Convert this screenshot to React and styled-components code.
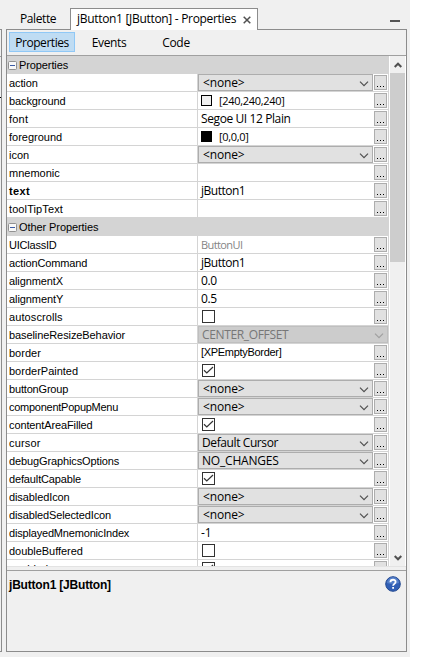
import React from 'react';
import styled, { createGlobalStyle } from 'styled-components';

const Global = createGlobalStyle`
  * { box-sizing: border-box; }
  body { margin: 0; background: #fff; overflow: hidden; }
`;
const ui = `'Open Sans', 'Noto Sans', sans-serif`;
const arial = `'Liberation Sans', Arial, sans-serif`;

const Window = styled.div`
  width: 410px; height: 657px; background: #f0f0f0; color: #000;
  display: flex; overflow: hidden;
`;
const Neighbour = styled.div`
  width: 2px; height: 623px; margin-top: 29px; flex: none;
  border: solid #8c8c8c; border-width: 1px 1px 1px 0;
  display: flex; flex-direction: column;
`;
const NeighbourBar = styled.div`height: 27px; border-bottom: 1px solid #a0a0a0;`;
const NeighbourMark = styled.div`height: 1px; margin-top: 40px; background: #000;`;
const Dock = styled.div`width: 401px; margin-left: 4px; display: flex; flex-direction: column;`;
const TabStrip = styled.div`
  height: 30px; padding-top: 8px; display: flex; flex: none; font: 12px/22px ${ui};
`;
const Tab = styled.div`
  width: 64px; height: 22px; padding-left: 14px; white-space: nowrap;
  border-bottom: 1px solid #8c8c8c; letter-spacing: -0.4px;
`;
const ActiveTab = styled.div`
  width: 188px; height: 22px; padding-left: 6px; background: #fff;
  border: solid #8c8c8c; border-width: 1px 1px 0 1px;
  display: flex; align-items: flex-start; line-height: 20px; white-space: nowrap;
`;
const TabTitle = styled.span`width: 166px; letter-spacing: -0.31px;`;
const CloseIcon = styled.svg`width: 8px; height: 8px; margin-top: 7px; flex: none;`;
const StripRest = styled.div`
  flex: 1; height: 22px; border-bottom: 1px solid #8c8c8c;
  display: flex; justify-content: flex-end; padding: 12px 7px 0 0;
`;
const Minimise = styled.div`width: 10px; height: 2px; background: #555;`;
const Panel = styled.div`
  height: 622px; border: solid #8c8c8c; border-width: 0 1px 1px 1px;
  display: flex; flex-direction: column;
`;
const Toolbar = styled.div`
  height: 26px; flex: none; border-bottom: 1px solid #a0a0a0; padding: 2px 0 0 2px;
  display: flex; font: 12px/20px ${ui};
`;
const ModeButton = styled.div`
  width: ${p => p.$w}px; height: 20px; text-align: center; white-space: nowrap;
  letter-spacing: ${p => p.$ls || 0}px;
  ${p => p.$on && 'background: #bfdcf3; box-shadow: inset 0 0 0 1px #90c8f6;'}
  line-height: 21px;
`;
const Sheet = styled.div`
  height: 511px; flex: none; display: flex; overflow: hidden; background: #fff;
  border-bottom: 1px solid #e3e3e3;
`;
const Grid = styled.div`width: 382px; margin-right: 1px; flex: none;`;
const Group = styled.div`
  height: 18px; background: #d4d4d4; display: flex; align-items: center;
  font: 11px/18px ${arial}; white-space: nowrap;
`;
const Toggle = styled.svg`width: 9px; height: 9px; margin: 0 2px 0 1px;`;
const Row = styled.div`height: 18px; display: flex; border-bottom: 1px solid #d4d4d4; border-right: 1px solid #d4d4d4;`;
const Name = styled.div`
  width: 191px; height: 17px; flex: none; padding-left: 2px; border-right: 1px solid #d4d4d4;
  font: ${p => (p.$bold ? 'bold' : 'normal')} 11px/18px ${arial};
  letter-spacing: ${p => p.$ls || 0}px; white-space: nowrap;
`;
const Value = styled.div`
  width: 176px; height: 17px; flex: none; display: flex; align-items: center;
  padding-left: 3px; font: 12px/17px ${ui}; white-space: nowrap;
  color: ${p => (p.$muted ? '#858585' : '#000')};
`;
const Small = styled.span`
  font: 11px/${p => (p.$arial ? 19 : 17)}px ${p => (p.$arial ? arial : ui)};
  letter-spacing: ${p => p.$ls || 0}px;
`;
const Label = styled.span`letter-spacing: ${p => p.$ls || 0}px;`;
const Swatch = styled.span`
  width: 11px; height: 11px; margin-right: 7px; border: 1px solid #000;
  background: ${p => p.$color};
`;
const Combo = styled.div`
  width: ${p => (p.$disabled ? 190 : 175)}px; height: 17px; flex: none;
  display: flex; align-items: center; justify-content: space-between;
  padding: 0 3px 0 ${p => (p.$tight ? 3 : 4)}px; background: ${p => (p.$disabled ? '#ccc' : '#e1e1e1')};
  border: 1px solid ${p => (p.$disabled ? '#bfbfbf' : '#adadad')};
  color: ${p => (p.$disabled ? '#777' : '#000')};
  font: 12px/15px ${ui}; white-space: nowrap; margin-right: 1px;
`;
const Chevron = styled.svg`width: 10px; height: 6px; margin-top: 2px;`;
const More = styled.div`
  width: 13px; height: 15px; margin-top: 1px; flex: none; background: #e1e1e1;
  border: 1px solid #adadad; display: flex; justify-content: center; align-items: flex-end;
  gap: 2px; padding-bottom: 2px;
`;
const Dot = styled.i`width: 1px; height: 1px; background: #000;`;
const Check = styled.svg`width: 13px; height: 13px; margin-left: 1px;`;
const Scrollbar = styled.div`
  width: 15px; background: #f0f0f0; display: flex; flex-direction: column; align-items: center;
`;
const Arrow = styled.svg`width: 8px; height: 6px; flex: none; margin: ${p => p.$m};`;
const Thumb = styled.div`width: 15px; height: 189px; background: #cdcdcd; flex: none;`;
const Gap = styled.div`flex: 1;`;
const Description = styled.div`
  flex: 1; margin-top: 3px; border-top: 1px solid #a0a0a0; padding: 5px 5px 0 2px;
  display: flex; justify-content: space-between; font: bold 12px/18px ${arial};
`;
const Help = styled.svg`width: 16px; height: 16px;`;

const rows = [
  ['g', 'Properties', 0],
  ['c', 'action', '<none>'], ['w', 'background', '[240,240,240]', '#f0f0f0'],
  ['t', 'font', 'Segoe UI 12 Plain'], ['w', 'foreground', '[0,0,0]', '#000'],
  ['c', 'icon', '<none>'], ['t', 'mnemonic', ''], ['t', 'text', 'jButton1'],
  ['t', 'toolTipText', ''], ['g', 'Other Properties', 0],
  ['m', 'UIClassID', 'ButtonUI'], ['t', 'actionCommand', 'jButton1'],
  ['t', 'alignmentX', '0.0'], ['t', 'alignmentY', '0.5'], ['k', 'autoscrolls', false],
  ['d', 'baselineResizeBehavior', 'CENTER_OFFSET'], ['a', 'border', '[XPEmptyBorder]'],
  ['k', 'borderPainted', true], ['c', 'buttonGroup', '<none>'],
  ['c', 'componentPopupMenu', '<none>'], ['k', 'contentAreaFilled', true],
  ['c', 'cursor', 'Default Cursor'], ['c', 'debugGraphicsOptions', 'NO_CHANGES'],
  ['k', 'defaultCapable', true], ['c', 'disabledIcon', '<none>'],
  ['c', 'disabledSelectedIcon', '<none>'], ['t', 'displayedMnemonicIndex', '-1'],
  ['k', 'doubleBuffered', false], ['k', 'enabled', true],
];

// Tracking per text, in px.
const spacing = {
  action: -0.1, background: -0.1, font: 0.2, text: 0.4, toolTipText: 0.1,
  Properties: -0.1, 'Other Properties': -0.08, UIClassID: -0.22, actionCommand: -0.15,
  alignmentX: -0.1, alignmentY: -0.08, autoscrolls: 0.1, baselineResizeBehavior: -0.09,
  buttonGroup: -0.18, componentPopupMenu: -0.26, contentAreaFilled: -0.12, cursor: 0.15,
  debugGraphicsOptions: -0.12, defaultCapable: -0.14, disabledIcon: -0.1,
  disabledSelectedIcon: -0.13, displayedMnemonicIndex: -0.18, doubleBuffered: -0.04,
  '[XPEmptyBorder]': -0.3, '<none>': -0.15, ButtonUI: -0.6, '[240,240,240]': -0.31,
  '[0,0,0]': -0.3, 'Segoe UI 12 Plain': -0.4, jButton1: -0.5, CENTER_OFFSET: -0.35,
  'Default Cursor': -0.4, NO_CHANGES: -0.2, '0.0': -0.4, '0.5': -0.4,
};

function Cell({ kind, value, color }) {
  const ls = spacing[value];
  if (kind === 'c' || kind === 'd') {
    const off = kind === 'd';
    return (
      <Combo $disabled={off} $tight={value !== '<none>'}>
        <Label $ls={ls}>{value}</Label>
        <Chevron viewBox="0 0 10 6"><path d="M1 .7 5 4.7 9 .7" fill="none" stroke={off ? '#a0a0a0' : '#505050'} strokeWidth="1.2" /></Chevron>
      </Combo>
    );
  }
  if (kind === 'k') {
    return (
      <Value>
        <Check viewBox="0 0 13 13">
          <rect x=".5" y=".5" width="12" height="12" fill="#fff" stroke="#333" />
          {value && <path d="M2 6.3 4.8 9 11 3" fill="none" stroke="#333" strokeWidth="1.2" />}
        </Check>
      </Value>
    );
  }
  if (kind === 'w') return <Value><Swatch $color={color} /><Small $ls={ls}>{value}</Small></Value>;
  if (kind === 'm') return <Value $muted><Small $ls={ls}>{value}</Small></Value>;
  if (kind === 'a') return <Value><Small $arial $ls={ls}>{value}</Small></Value>;
  return <Value><Label $ls={ls}>{value}</Label></Value>;
}

export default function App() {
  return (
    <>
      <Global />
      <Window>
        <Neighbour><NeighbourBar /><NeighbourMark /></Neighbour>
        <Dock>
          <TabStrip>
            <Tab>Palette</Tab>
            <ActiveTab>
              <TabTitle>jButton1 [JButton] - Properties</TabTitle>
              <CloseIcon viewBox="0 0 8 8"><path d="M.7.7 7.3 7.3M7.3.7.7 7.3" stroke="#505050" strokeWidth="1.5" /></CloseIcon>
            </ActiveTab>
            <StripRest><Minimise /></StripRest>
          </TabStrip>
          <Panel>
            <Toolbar>
              <ModeButton $w={66} $ls={-0.45} $on>Properties</ModeButton>
              <ModeButton $w={68} $ls={-0.35}>Events</ModeButton>
              <ModeButton $w={66} $ls={-0.3}>Code</ModeButton>
            </Toolbar>
            <Sheet>
              <Grid>
                {rows.map(([kind, name, value, color]) => kind === 'g' ? (
                  <Group key={name}>
                    <Toggle viewBox="0 0 9 9"><rect x=".5" y=".5" width="8" height="8" rx="1" fill="#f8f8f8" stroke="#919191" /><path d="M2 4.5h5" stroke="#3b5ba5" /></Toggle>
                    <Label $ls={spacing[name]}>{name}</Label>
                  </Group>
                ) : (
                  <Row key={name}>
                    <Name $bold={name === 'text'} $ls={spacing[name]}>{name}</Name>
                    <Cell kind={kind} value={value} color={color} />
                    {kind !== 'd' && <More><Dot /><Dot /><Dot /></More>}
                  </Row>
                ))}
              </Grid>
              <Scrollbar>
                <Arrow $m="6px 0 5px" viewBox="0 0 8 6"><path d="M.7 5 4 1.7 7.3 5" fill="none" stroke="#505050" strokeWidth="2" /></Arrow>
                <Thumb /><Gap />
                <Arrow $m="0 0 5px" viewBox="0 0 8 6"><path d="M.7 1 4 4.3 7.3 1" fill="none" stroke="#505050" strokeWidth="2" /></Arrow>
              </Scrollbar>
            </Sheet>
            <Description>
              <Label $ls={-0.19}>jButton1 [JButton]</Label>
              <Help viewBox="0 0 16 16">
                <circle cx="8" cy="8" r="7.3" fill="#315fb5" stroke="#244a91" />
                <path d="M2 7a6 6 0 0 1 12 0Q8 9 2 7" fill="#6d94d7" opacity=".6" />
                <path d="M5.4 6.2C5.4 2.9 10.7 3 10.6 6c0 1.8-2.5 1.9-2.5 3.8M8.1 11v1.8" fill="none" stroke="#fff" strokeWidth="1.8" />
              </Help>
            </Description>
          </Panel>
        </Dock>
      </Window>
    </>
  );
}
